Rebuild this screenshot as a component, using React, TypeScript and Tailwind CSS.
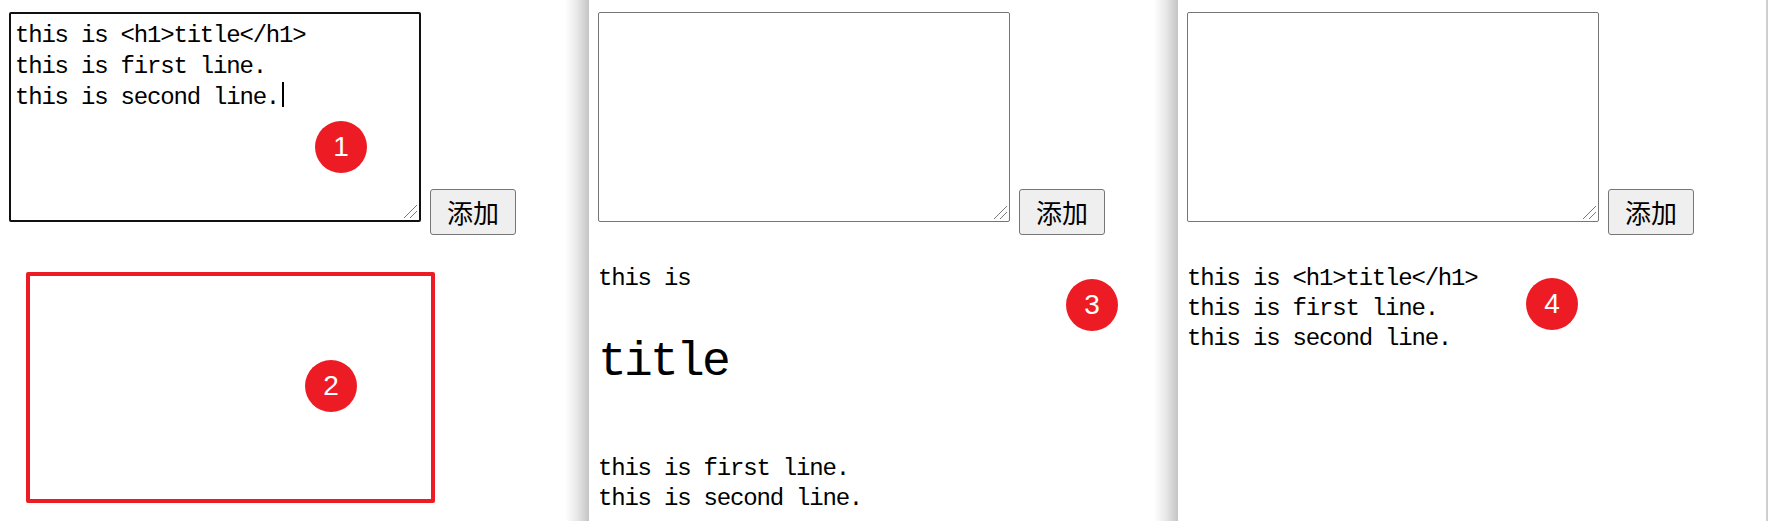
import React from "react";

const mono = "font-['Liberation_Mono',monospace]";

function Badge({ n, pos }: { n: string; pos: string }) {
  return (
    <div
      className={`absolute ${pos} flex h-[52px] w-[52px] items-center justify-center rounded-full bg-[#ED1C24] font-['Liberation_Sans',Arial,sans-serif] text-[28px] leading-none text-white`}
    >
      {n}
    </div>
  );
}

function Grip() {
  return (
    <svg className="absolute bottom-[1px] right-[1px]" width="16" height="16" viewBox="0 0 16 16">
      <line x1="15" y1="2" x2="2" y2="15" stroke="#7a7a7a" strokeWidth="1" />
      <line x1="15" y1="8" x2="8" y2="15" stroke="#7a7a7a" strokeWidth="1" />
    </svg>
  );
}

function AddButton() {
  return (
    <button className="mt-[177px] h-[46px] w-[86px] shrink-0 rounded-[3px] border border-[#767676] bg-[#efefef] font-['Noto_Sans_CJK_SC',sans-serif] text-[26px] leading-none text-black">
      添加
    </button>
  );
}

function EmptyBox() {
  return (
    <div className="relative h-[210px] w-[412px] shrink-0 rounded-[2px] border border-[#767676] bg-white">
      <Grip />
    </div>
  );
}

function Shadow() {
  return <div className="w-[24px] shrink-0 bg-linear-to-r from-white via-[#e8e8e8] to-[#c4c4c4]" />;
}

export default function App() {
  return (
    <div className="flex h-[521px] w-[1768px] overflow-hidden bg-white text-black">
      {/* 1: typing */}
      <div className="flex w-[589px] shrink-0">
        <div className="relative flex-1 pl-[9px] pt-[12px]">
          <div className="flex items-start gap-[9px]">
            <div
              className={`relative h-[210px] w-[412px] shrink-0 rounded-[2px] border-2 border-[#101010] bg-white px-[4px] pt-[6px] ${mono} text-[24px] leading-[31px] tracking-[-1.2px]`}
            >
              <div>{"this is <h1>title</h1>"}</div>
              <div>this is first line.</div>
              <div>
                this is second line.
                <span className="ml-[3px] inline-block h-[25px] w-[2px] bg-black align-top" />
              </div>
              <Grip />
            </div>
            <AddButton />
          </div>

          {/* 2: empty result */}
          <div className="ml-[17px] mt-[37px] h-[231px] w-[409px] rounded-[2px] border-4 border-[#ED1C24]" />

          <Badge n="1" pos="left-[315px] top-[121px]" />
          <Badge n="2" pos="left-[305px] top-[360px]" />
        </div>
        <Shadow />
      </div>

      {/* 3: rendered as html */}
      <div className="flex w-[589px] shrink-0">
        <div className="relative flex-1 pl-[9px] pt-[12px]">
          <div className="flex items-start gap-[9px]">
            <EmptyBox />
            <AddButton />
          </div>
          <div className={`mt-[29px] ${mono} text-[24px] leading-[30px] tracking-[-1.2px]`}>
            <div>this is</div>
            <h1 className="mt-[41px] text-[48px] font-normal leading-[54px] tracking-[-2.8px]">title</h1>
            <div className="mt-[65px]">this is first line.</div>
            <div>this is second line.</div>
          </div>
          <Badge n="3" pos="left-[477px] top-[279px]" />
        </div>
        <Shadow />
      </div>

      {/* 4: rendered as text */}
      <div className="relative w-[590px] shrink-0 border-r-2 border-[#cfcfcf] pl-[9px] pt-[12px]">
        <div className="flex items-start gap-[9px]">
          <EmptyBox />
          <AddButton />
        </div>
        <div className={`mt-[29px] ${mono} text-[24px] leading-[30px] tracking-[-1.2px]`}>
          <div>{"this is <h1>title</h1>"}</div>
          <div>this is first line.</div>
          <div>this is second line.</div>
        </div>
        <Badge n="4" pos="left-[348px] top-[278px]" />
      </div>
    </div>
  );
}
